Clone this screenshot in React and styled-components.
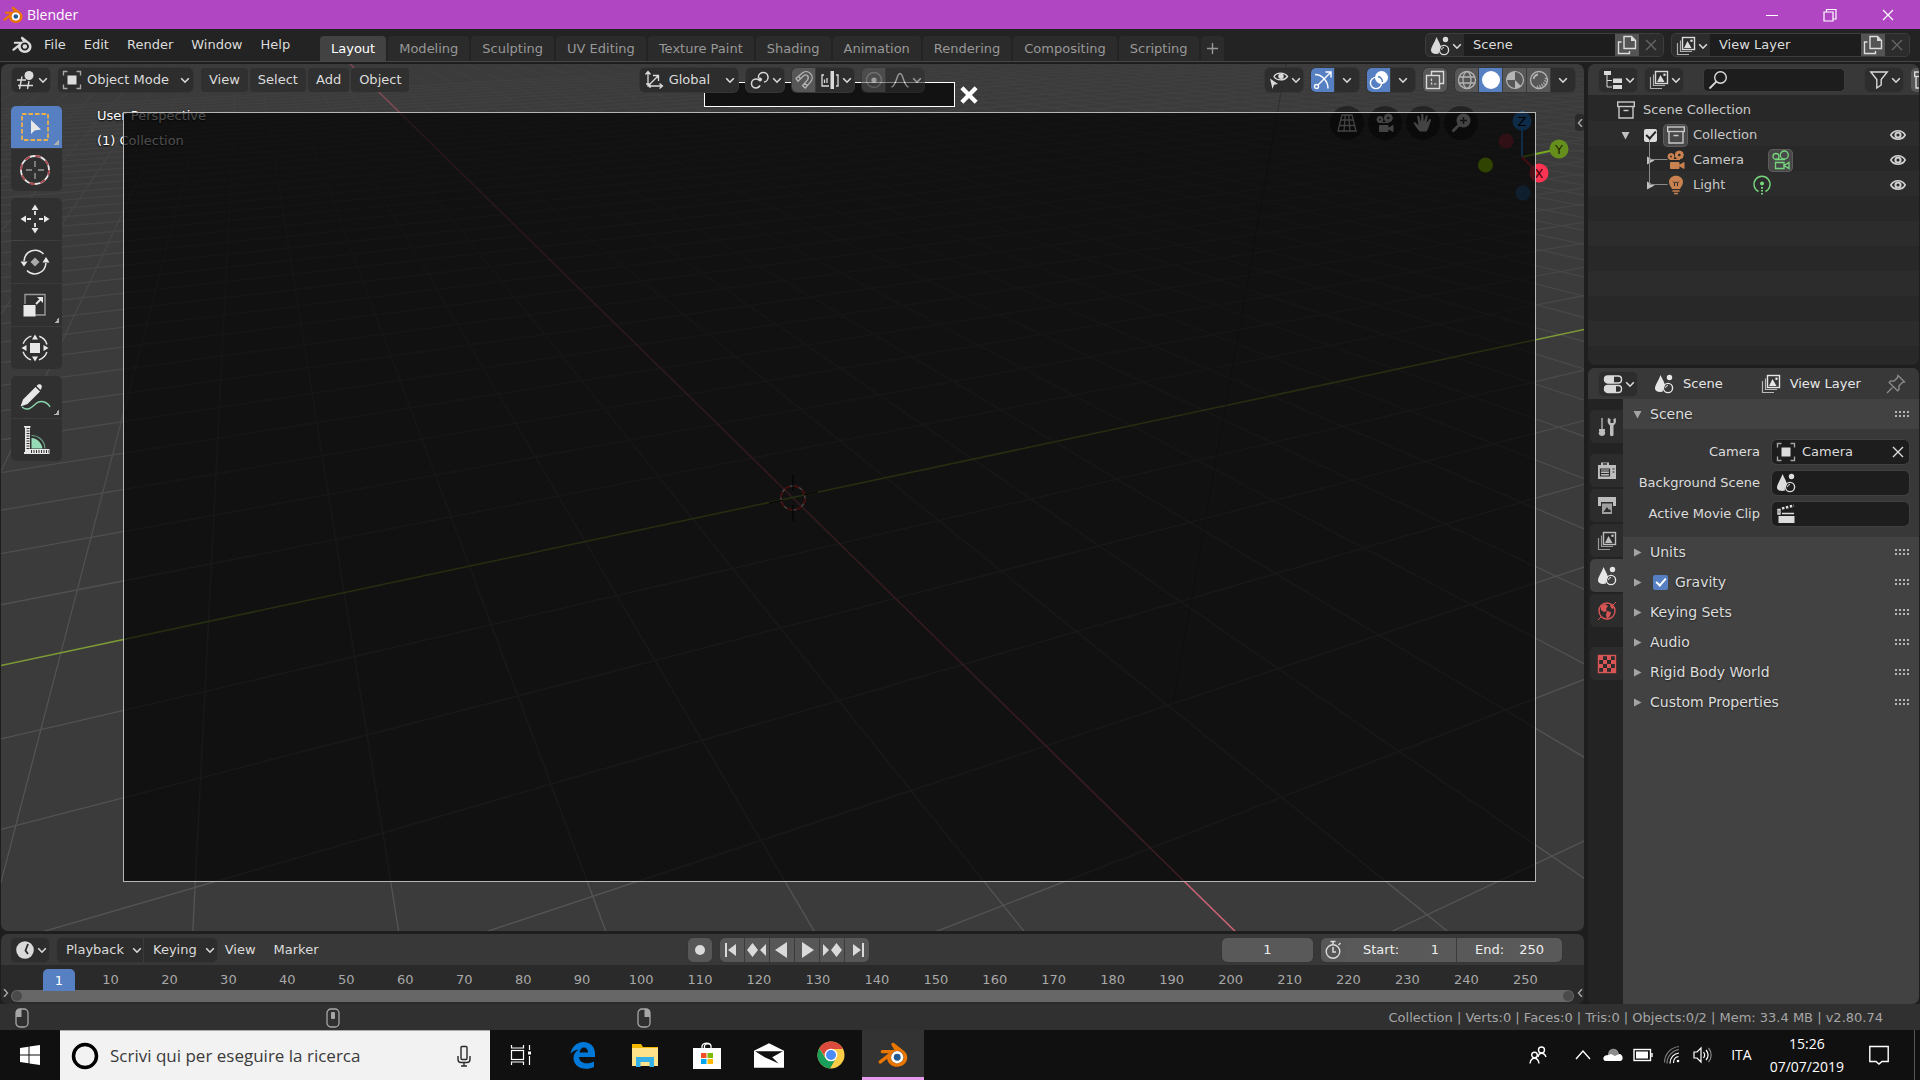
import React from "react";
import styled, { createGlobalStyle, css } from "styled-components";

const GlobalStyle = createGlobalStyle`
  * {
    box-sizing: border-box;
  }
  body {
    margin: 0;
    background: #1e1e1e;
    color: #dcdcdc;
    font-family: "DejaVu Sans", sans-serif;
    font-size: 13px;
    line-height: 16px;
  }
  button, input, select {
    font: inherit;
    color: inherit;
    margin: 0;
    padding: 0;
    border: 0;
    background: none;
    outline: none;
  }
  ul {
    list-style: none;
    margin: 0;
    padding: 0;
  }
  svg {
    display: block;
    flex: none;
  }
`;

/* ---------- icons ---------- */

const Svg = ({ size = 20, box = 20, children, ...rest }) => (
  <svg
    width={size}
    height={size}
    viewBox={`0 0 ${box} ${box}`}
    fill="none"
    stroke="currentColor"
    strokeWidth="1.4"
    aria-hidden="true"
    {...rest}
  >
    {children}
  </svg>
);

const solid = { fill: "currentColor", stroke: "none" };

const Chevron = () => (
  <Svg size={10} box={10} strokeWidth="1.6">
    <path d="M1.2 3.2 5 7.2 8.8 3.2" />
  </Svg>
);

const BlenderLogo = ({ size = 20, main = "currentColor", ring = "none", eye = "currentColor" }) => (
  <Svg size={size} stroke="none">
    <path
      fill={main}
      fillRule="evenodd"
      d="M9.2 2.2c.6-.5 1.3-.4 1.9.1l6.100 4.800c1.500 1.200 2.300 2.800 2.300 4.600 0 3.500-3 6.200-6.700 6.200-3.600 0-6.300-2.300-6.700-5.400l-3.800 3c-.6.4-1.300.4-1.700-.1-.4-.6-.2-1.200.3-1.700l6.300-4.900H3c-.8 0-1.200-.4-1.200-1 0-.7.5-1.100 1.200-1.100h7.800L9.300 3.800c-.6-.5-.6-1.100-.1-1.600ZM12.800 7.400c-2.400 0-4.100 1.800-4.100 4.100s1.800 4 4.100 4 4.200-1.700 4.200-4-1.800-4.100-4.200-4.100Z"
    />
    <circle cx="12.800" cy="11.500" r="4.100" fill={ring} />
    <circle cx="12.800" cy="11.500" r="2.300" fill={eye} />
  </Svg>
);

const ViewportIcon = () => (
  <Svg>
    <path d="M1 10h9M2 15.500h15M6 6.500 3.500 19M13 11l-1.500 8" />
    <circle cx="13" cy="5.500" r="4.500" {...solid} />
  </Svg>
);
const ObjectIcon = () => (
  <Svg>
    <rect x="5.500" y="5.500" width="9" height="9" {...solid} />
    <path d="M1.500 5.500v-4h4M14.500 1.500h4v4M18.500 14.500v4h-4M5.500 18.500h-4v-4" opacity=".7" />
  </Svg>
);
const OrientIcon = () => (
  <Svg>
    <path d="M4 2v14h14M4 16 14 6M1.500 4.500 4 1.500l2.500 3M15.500 13.500l3 2.500-3 2.500M9 5.500h5.500V11M2 14h4v4" strokeWidth="1.300" />
  </Svg>
);
const PivotIcon = () => (
  <Svg strokeWidth="1.500">
    <path d="M8.500 8A4.800 4.800 0 1 1 14 12" />
    <circle cx="6" cy="13.500" r="4.500" strokeDasharray="21 7.300" strokeDashoffset="-2" />
    <circle cx="10" cy="9.500" r="2" {...solid} />
  </Svg>
);
const MagnetIcon = () => (
  <Svg strokeWidth="1.300">
    <path d="M2 8.500 8 3.200c6-5 14 3 8.300 9l-5 5.800-2.800-2.400 5-5.800c2.200-3-1-6.400-4-4L4 11.300ZM4.500 6.500l2.300 2.500M10.500 13l2.800 2.400" />
  </Svg>
);
const IncrementIcon = () => (
  <Svg>
    <path d="M4 5H2v11h7M4.500 13V9.500M7 13V8M16 5h2v11h-2" strokeWidth="1.300" />
    <rect x="10.500" y="1" width="3.500" height="18" {...solid} />
  </Svg>
);
const ProportionalIcon = () => (
  <Svg>
    <circle cx="10" cy="10" r="7.500" opacity=".45" />
    <circle cx="10" cy="10" r="2.600" {...solid} />
  </Svg>
);
const FalloffIcon = () => (
  <Svg>
    <path d="M1.500 17C6.500 16 6.500 3.500 10 3.500S13.500 16 18.500 17" />
  </Svg>
);
const VisibilityIcon = () => (
  <Svg>
    <path d="M5 6.500C7.500 2 15.500 2 18.500 6.500 15.500 11 7.500 11 5 6.500Z" />
    <circle cx="12" cy="6.200" r="2.700" {...solid} />
    <path d="M1 8.500 9 14l-4 .8L3.500 19Z" {...solid} />
  </Svg>
);
const GizmoIcon = () => (
  <Svg>
    <path d="M2 4.500C9 4.500 15 11 15 18.500M5 15 18 2M12.500 2H18v5.500" />
    <circle cx="3.500" cy="16.500" r="2" />
  </Svg>
);
const OverlayIcon = () => (
  <Svg>
    <circle cx="12.500" cy="7.500" r="6.500" {...solid} />
    <circle cx="7" cy="13" r="5.600" />
    <path d="M9 6.500a6 6 0 0 1 4.500 5.500" stroke="#5680c2" />
  </Svg>
);
const XrayIcon = () => (
  <Svg>
    <path d="M6.500 5V1.500h12v12H15" />
    <rect x="1.500" y="5.500" width="13" height="13" />
    <path d="M6.500 8.500v5.500h5" strokeDasharray="2.500 1.500" strokeWidth="1.200" />
  </Svg>
);
const WireIcon = () => (
  <Svg strokeWidth="1.300">
    <circle cx="10" cy="10" r="8.500" />
    <ellipse cx="10" cy="10" rx="4" ry="8.500" />
    <path d="M2 7h16M2 13h16" />
  </Svg>
);
const SolidIcon = () => (
  <Svg>
    <circle cx="10" cy="10" r="9" {...solid} />
  </Svg>
);
const MaterialIcon = () => (
  <Svg>
    <circle cx="10" cy="10" r="8.500" strokeWidth="1.200" />
    <path d="M10 1.500V10l6 6A8.500 8.500 0 0 1 10 18.500V10H1.500A8.500 8.500 0 0 1 10 1.500Z" {...solid} />
  </Svg>
);
const RenderedIcon = () => (
  <Svg>
    <circle cx="10" cy="10" r="8.500" strokeWidth="1.300" />
    <path d="M4.500 9A5.500 5.500 0 0 1 9 4.500" strokeWidth="1.800" />
    <path d="M8 17.500A11 11 0 0 0 17.500 8" strokeWidth="3.500" strokeDasharray="1.300 1.300" opacity=".8" />
  </Svg>
);
const SceneIcon = () => (
  <Svg>
    <path d="M6.500 1c2 4.500 4.500 8 4.500 11-2 1-2.500 3-2 5.500C5 18.500 1 17.500 1 14.500 1 11 5 6 6.500 1Z" {...solid} />
    <circle cx="15.500" cy="3.500" r="2.700" {...solid} />
    <circle cx="14" cy="14" r="4.600" />
    <path d="M11.500 14a2.500 2.500 0 0 1 2.500-2.500" strokeWidth="1" />
  </Svg>
);
const LayerIcon = () => (
  <Svg>
    <rect x="6.500" y="1.500" width="12" height="12" />
    <path d="M4.500 4.500v11h11.500M1.500 7v11.500H13" strokeWidth="1.200" opacity=".75" />
    <path d="M8 12 11.500 5l4 7Z" {...solid} />
    <circle cx="15.500" cy="4.800" r="1.300" {...solid} />
  </Svg>
);
const CopyIcon = () => (
  <Svg>
    <path d="M7 1.500h7.500l4 4v8H7Z" />
    <path d="M14 1.500v4.500h4.500" {...solid} />
    <path d="M4.500 7H1.500v11.500h11V16" />
  </Svg>
);
const CrossIcon = ({ size = 14, width = 1.4 }) => (
  <Svg size={size} box={14} strokeWidth={width}>
    <path d="M2 2l10 10M12 2 2 12" />
  </Svg>
);
const PlusIcon = () => (
  <Svg size={13} box={13}>
    <path d="M6.500 1v11M1 6.500h11" />
  </Svg>
);
const TreeIcon = () => (
  <Svg>
    <rect x="1" y="1" width="7" height="4" {...solid} />
    <rect x="10" y="8.500" width="9" height="4.500" {...solid} />
    <rect x="10" y="15" width="9" height="4" {...solid} />
    <path d="M4 5v12h5M4 10.500h5" strokeWidth="1" />
  </Svg>
);
const SearchIcon = () => (
  <Svg>
    <circle cx="12.500" cy="7.500" r="5.800" />
    <path d="M8.300 11.700 1.500 18.500" strokeWidth="1.800" />
  </Svg>
);
const FilterIcon = () => (
  <Svg>
    <path d="M1.800 2h16.400l-6 7.500V15l-4.400 3V9.500Z" />
  </Svg>
);
const CollectionIcon = () => (
  <Svg>
    <rect x="1.700" y="2" width="16.600" height="4.500" />
    <path d="M3 6.500V18h14V6.500M7.500 10.500h5" />
  </Svg>
);
const CameraIcon = ({ outline }) => (
  <Svg {...(outline ? {} : { fill: "currentColor" })} strokeWidth={outline ? 1.3 : 1}>
    <circle cx="13.300" cy="5" r="4" />
    <circle cx="5" cy="6.500" r="3" />
    <path d="M4 9.500h10M4.500 12.500h8.500v6H4.500ZM13 15.500l5-3v6Z" />
    {!outline && <circle cx="13.300" cy="5" r="1.300" fill="#282828" stroke="none" />}
    {!outline && <circle cx="5" cy="6.500" r=".9" fill="#282828" stroke="none" />}
  </Svg>
);
const BulbIcon = () => (
  <Svg>
    <path d="M10 .8c4 0 7 2.700 7 6.300 0 3-2 4.500-3 6.900H6c-1-2.400-3-3.900-3-6.900C3 3.500 6 .8 10 .8Z" {...solid} />
    <path d="M7 6.500 8.500 8 10 7l1.500 1L13 6.500M8.500 8v3M11.500 8v3" stroke="#2c2c2c" strokeWidth="1" />
    <path d="M6.500 16h7M8 18.500h4" />
  </Svg>
);
const LampDataIcon = () => (
  <Svg>
    <path d="M6.500 16.500A8 8 0 1 1 13.500 16.500" />
    <circle cx="10" cy="8.500" r="2" {...solid} />
    <path d="M10 12v1.800M10 15v1.500M10 18v1.500" strokeWidth="2" />
  </Svg>
);
const EyeIcon = () => (
  <Svg size={16}>
    <path d="M1 10C5 3 15 3 19 10 15 17 5 17 1 10Z" strokeWidth="2" />
    <circle cx="10" cy="10" r="3.200" strokeWidth="2.500" />
  </Svg>
);
const PropsIcon = () => (
  <Svg>
    <rect x="1.500" y="2" width="17" height="7" rx="3.200" />
    <rect x="1.500" y="11.500" width="17" height="7" rx="3.200" />
    <path d="M5 2h6v7H5c-4.500-.5-4.500-6.500 0-7ZM5 11.500h8v7H5c-4.500-.5-4.500-6.500 0-7Z" {...solid} />
  </Svg>
);
const PinIcon = () => (
  <Svg>
    <path d="M12 1.500 18.500 8l-2.300.6-3.300 3.300.2 3.600-1.500 1.300-8.400-8.400 1.300-1.500 3.600.2 3.300-3.300ZM6.500 13.500 1 19" />
  </Svg>
);
const ToolIcon = () => (
  <Svg>
    <path d="M5 1v11" strokeWidth="1.300" />
    <path d="M2 12h6v2H7.500c1.500 2 .5 5-2.500 5s-4-3-2.500-5H2Z" {...solid} />
    <path d="M11 1c-1 4 0 6 2 7.500V18c0 1.500 3.500 1.500 3.500 0V8.500C19 7 19.500 4 18.500 1l-2 1v4h-3V2Z" {...solid} />
  </Svg>
);
const RenderIcon = () => (
  <Svg>
    <path d="M4 4V1.500h8V4h7v14H1V4Z" {...solid} />
    <path d="M3.500 8h9v7h-9ZM3.500 10h9M3.500 12.500h9M15.500 8h2M15.500 11h2" stroke="#2c2c2c" strokeWidth="1.200" />
    <path d="M6 3h4" stroke="#2c2c2c" />
  </Svg>
);
const OutputIcon = () => (
  <Svg>
    <path d="M1 1h18v9h-3V6H4v4H1Z" {...solid} />
    <path d="M5 7.500h10V18H5Z" opacity=".8" {...solid} />
    <path d="M6.500 16 10 11l2 3 1-1 1 3Z" fill="#2c2c2c" stroke="none" />
  </Svg>
);
const WorldIcon = () => (
  <Svg>
    <circle cx="10" cy="10" r="8" />
    <path d="M4 5l4-2 3 2-2 3 1 2-3 1-3-2ZM10 10l4 1-1 4-3 3-1-4ZM14 3l3 4-2 1-2-3Z" {...solid} />
    <path d="M16 4l3-3M4 16l-3 3" strokeWidth="1" />
  </Svg>
);
const TextureIcon = () => (
  <Svg>
    <rect x="1.500" y="1.500" width="17" height="17" />
    {[0, 1, 2, 3].map((r) =>
      [0, 1].map((c) => (
        <rect key={`${r}${c}`} x={2 + c * 8 + (r % 2) * 4} y={2 + r * 4} width="4" height="4" {...solid} />
      ))
    )}
  </Svg>
);
const ClipIcon = () => (
  <Svg>
    <path d="M2.500 12h16v7h-16Z" {...solid} />
    <path d="M2 5.500h2v4.500H2ZM6 9.500h12" />
    <path d="M6 4.500 18 1.500" strokeWidth="2.500" strokeDasharray="2.500 1.500" />
  </Svg>
);
const ClockIcon = () => (
  <Svg>
    <circle cx="10" cy="10" r="8.800" {...solid} />
    <path d="M13 4 10.500 10.500 13 14" stroke="#2c2c2c" strokeWidth="1.800" />
  </Svg>
);
const StopwatchIcon = () => (
  <Svg>
    <circle cx="10" cy="11.500" r="6.800" />
    <path d="M10 7v5h3M7.500 1.500h5M10 1.500v3M15.500 5l2-2" strokeWidth="1.500" />
  </Svg>
);

/* ---------- window chrome ---------- */

const Window = styled.div`
  display: flex;
  flex-direction: column;
  min-height: 100vh;
`;

const TitleBar = styled.header`
  display: flex;
  align-items: center;
  height: 29px;
  padding: 0 3px;
  gap: 4px;
  background: #b146c2;
  color: #fff;
  font-family: "Open Sans", sans-serif;
  font-size: 14px;
`;

const WindowButtons = styled.div`
  display: flex;
  align-self: stretch;
  margin-left: auto;
`;

const WindowButton = styled.button`
  display: grid;
  place-items: center;
  width: 58px;
`;

const MenuBar = styled.nav`
  display: flex;
  align-items: stretch;
  height: 33px;
  margin-bottom: 2px;
  padding: 0 10px 0 12px;
  background: #232323;
  border-bottom: 1px solid #474747;
`;

const Menus = styled.div`
  display: flex;
  align-items: center;
  gap: 18px;
  width: 308px;
`;

const MenuButton = styled.button`
  height: 24px;
`;

const LogoButton = styled(MenuButton)`
  margin-right: -6px;
`;

const Tabs = styled.div`
  display: flex;
  align-items: flex-end;
  gap: 2px;
`;

const Tab = styled.button`
  height: 25px;
  padding: 0 11px;
  border-radius: 4px 4px 0 0;
  background: ${({ $active }) => ($active ? "#424242" : "#2b2b2b")};
  color: ${({ $active }) => ($active ? "#fff" : "#989898")};
`;

const AddTab = styled(Tab)`
  padding: 0 5px;
`;

const DataBlocks = styled.div`
  display: flex;
  align-items: center;
  gap: 7px;
  margin-left: auto;
`;

const DataBlock = styled.div`
  display: flex;
  width: 239px;
  height: 24px;
  border: 1px solid #3d3d3d;
  border-radius: 5px;
  overflow: hidden;
  background: #2c2c2c;
`;

const DataName = styled.input`
  flex: 1;
  min-width: 0;
  padding: 0 9px;
  background: #1d1d1d;
`;

const DataButton = styled.button`
  display: grid;
  place-items: center;
  width: 24px;
  background: ${({ $raised }) => ($raised ? "#545454" : "#2c2c2c")};
  color: ${({ $raised }) => ($raised ? "#dcdcdc" : "#666")};
`;

/* ---------- shared controls ---------- */

const Main = styled.main`
  display: flex;
  flex: 1;
  gap: 4px;
  padding: 0 1px;
`;

const LeftColumn = styled.div`
  display: flex;
  flex-direction: column;
  flex: 1;
  min-width: 0;
  gap: 3px;
`;

const RightColumn = styled.aside`
  display: flex;
  flex-direction: column;
  width: 331px;
  gap: 3px;
`;

const Group = styled.div`
  display: flex;
  height: 24px;
  border-radius: 5px;
  overflow: hidden;
  background: #2d2d2d;
  box-shadow: 0 0 0 1px #363636;
  opacity: ${({ $muted }) => ($muted ? 0.6 : 1)};
`;

const Control = styled.button`
  display: flex;
  align-items: center;
  justify-content: center;
  gap: 2px;
  height: 24px;
  min-width: 24px;
  padding: ${({ $menu }) => ($menu ? "0 2px 0 4px" : "0 2px")};
  color: ${({ $on, $dim }) => ($on ? "#fff" : $dim ? "#b4b4b4" : "#dadada")};
  background: ${({ $on, $raised }) => ($on ? "#5680c2" : $raised ? "#575757" : "transparent")};
  & + & {
    box-shadow: -1px 0 0 #3b3b3b;
  }
`;

const SelectBox = styled.label`
  display: flex;
  align-items: center;
  gap: 5px;
  width: ${({ $width }) => $width};
  height: 24px;
  padding: 0 3px 0 4px;
  select {
    flex: 1;
    min-width: 0;
    height: 24px;
    appearance: none;
  }
`;

const TextControl = styled.button`
  height: 24px;
  padding: 0 8px;
  border-radius: 4px;
  background: ${({ $flat }) => ($flat ? "transparent" : "#303030")};
`;

const MenuControl = ({ icon: Icon, label }) => (
  <Group>
    <Control $menu aria-label={label}>
      <Icon />
      <Chevron />
    </Control>
  </Group>
);

const Dropdown = ({ icon: Icon, label, value, width }) => (
  <Group>
    <SelectBox $width={width}>
      <Icon />
      <select aria-label={label} defaultValue={value}>
        <option>{value}</option>
      </select>
      <Chevron />
    </SelectBox>
  </Group>
);

/* ---------- 3D viewport ---------- */

const Viewport = styled.section`
  position: relative;
  flex: 1;
  min-height: 480px;
  border-radius: 7px;
  overflow: hidden;
  background: #3b3b3b;
`;

const FloorSvg = styled.svg`
  position: absolute;
  inset: 0;
  width: 100%;
  height: 100%;
`;

const ViewLabel = styled.div`
  position: absolute;
  left: 96px;
  top: 39px;
  line-height: 25px;
  color: #fff;
  text-shadow: 0 1px 2px #000;
`;

const NavButtons = styled.div`
  position: absolute;
  top: 42px;
  right: 106px;
  display: flex;
  gap: 4px;
`;

const NavButton = styled.button`
  display: grid;
  place-items: center;
  width: 34px;
  height: 34px;
  border-radius: 50%;
  background: rgba(0, 0, 0, 0.4);
  color: #e0e0e0;
`;

const AxisGizmo = styled.svg`
  position: absolute;
  top: 38px;
  right: 7px;
  font-size: 13px;
`;

const Shade = styled.div`
  position: absolute;
  inset: 48px 48px 49px 122px;
  border: 1px solid #b5b5b5;
  background: rgba(0, 0, 0, 0.7);
`;

const CaptureBox = styled.div`
  position: absolute;
  top: 18px;
  left: 703px;
  display: flex;
  align-items: center;
  gap: 4px;
  color: #fff;
`;

const CaptureInput = styled.input`
  width: 251px;
  height: 25px;
  border: 1px solid #fff;
  background: #121212;
`;

const ViewHeader = styled.div`
  position: relative;
  display: flex;
  padding: 4px 9px 0 11px;
  gap: 8px;
`;

const MenuRow = styled.div`
  display: flex;
  gap: 2px;
`;

const Spacer = styled.div`
  flex: ${({ $grow }) => $grow};
  margin-right: -8px;
`;

const Toolbar = styled.div`
  position: absolute;
  top: 42px;
  left: 10px;
  display: flex;
  flex-direction: column;
  gap: 7px;
`;

const ToolGroup = styled.div`
  display: flex;
  flex-direction: column;
  gap: 1px;
  border-radius: 5px;
  overflow: hidden;
`;

const ToolButton = styled.button`
  display: grid;
  place-items: center;
  width: 51px;
  height: 42px;
  padding-right: 3px;
  color: #e8e8e8;
  background: ${({ $active }) => ($active ? "#5680c2" : "#303030")};
  ${({ $more }) =>
    $more &&
    css`
      background-image: linear-gradient(135deg, transparent 50%, #b0b0b0 50%);
      background-size: 5px 5px;
      background-position: 43px 34px;
      background-repeat: no-repeat;
    `}
`;

const RegionToggle = styled.button`
  position: absolute;
  right: ${({ $side }) => ($side === "right" ? 0 : "auto")};
  left: ${({ $side }) => ($side === "left" ? 0 : "auto")};
  top: 50px;
  display: grid;
  place-items: center;
  width: 9px;
  height: 17px;
  border-radius: 3px;
  background: #2a2a2a;
  color: #aaa;
`;

const VIEW = { width: 1583, height: 867, focal: 1099, distance: 10.39 };

// perspective projection of a point on the floor plane
const project = (x, y) => {
  const depth = VIEW.distance - 0.8188 * x + 0.3617 * y;
  const sx = VIEW.width / 2 + (VIEW.focal * (0.41 * x + 0.912 * y)) / depth;
  const sy = VIEW.height / 2 + (VIEW.focal * (0.4018 * x - 0.1936 * y)) / depth;
  return [sx, sy];
};

const NEAR = 0.8;
const FAR = 60;

const alongX = (y) => [project(-FAR, y), project(Math.min(FAR, (VIEW.distance + 0.3617 * y - NEAR) / 0.8188), y)];
const alongY = (x) => [project(x, Math.max(-FAR, (NEAR + 0.8188 * x - VIEW.distance) / 0.3617)), project(x, FAR)];

const gridLines = [];
for (let i = -40; i <= 40; i++) {
  if (i === 0) continue;
  if (VIEW.distance + 0.3617 * i > NEAR) gridLines.push(alongX(i));
  gridLines.push(alongY(i));
}

const Line = ({ points: [a, b], ...rest }) => <line x1={a[0]} y1={a[1]} x2={b[0]} y2={b[1]} {...rest} />;

const Floor = () => (
  <FloorSvg viewBox="0 0 1583 867" preserveAspectRatio="xMidYMid slice" aria-hidden="true">
    <defs>
      <linearGradient id="fade" x1="0" y1="0" x2="0" y2="867" gradientUnits="userSpaceOnUse">
        <stop offset="0" stopColor="#fff" stopOpacity=".14" />
        <stop offset=".2" stopColor="#fff" stopOpacity=".4" />
        <stop offset=".6" stopColor="#fff" stopOpacity=".85" />
        <stop offset="1" stopColor="#fff" />
      </linearGradient>
      <linearGradient id="axis" x1="0" y1="0" x2="0" y2="867" gradientUnits="userSpaceOnUse">
        <stop offset="0" stopColor="#c4566a" stopOpacity=".45" />
        <stop offset=".4" stopColor="#c4566a" stopOpacity=".8" />
        <stop offset="1" stopColor="#cf6274" />
      </linearGradient>
      <mask id="distance" maskUnits="userSpaceOnUse" x="0" y="0" width="1583" height="867">
        <rect width="1583" height="867" fill="url(#fade)" />
      </mask>
    </defs>
    <g mask="url(#distance)" stroke="#555" strokeWidth="1.3">
      {gridLines.map((points, i) => (
        <Line key={i} points={points} />
      ))}
    </g>
    <Line points={alongX(0)} stroke="url(#axis)" strokeWidth="1.500" />
    <Line points={alongY(0)} stroke="#7c9b36" strokeWidth="1.500" />
    <path d="M1285 0 1172 640" stroke="#202020" strokeWidth="1" opacity=".45" />
    <g fill="none" strokeWidth="1.600">
      <circle cx="792" cy="434" r="12" stroke="#e8e8e8" />
      <circle cx="792" cy="434" r="12" stroke="#e01818" strokeDasharray="6 3.425" />
      <path d="M792 411v16M792 441v16M768 439l14-3M803 431l14-3" stroke="#000" strokeWidth="1" />
    </g>
  </FloorSvg>
);

const Gizmo = () => (
  <AxisGizmo width="110" height="110" viewBox="0 0 110 110" textAnchor="middle" aria-label="Navigation gizmo">
    <circle cx="18.500" cy="63" r="7.500" fill="#a2e000" />
    <circle cx="39" cy="39" r="7.500" fill="#a03448" />
    <circle cx="56" cy="91" r="7.500" fill="#34689c" />
    <g strokeWidth="2" fill="none">
      <path d="M55 55V19" stroke="#2f92ee" />
      <path d="M55 55 92 47" stroke="#78a820" />
      <path d="M55 55 72 72" stroke="#d82c49" />
    </g>
    <circle cx="55" cy="19" r="9.500" fill="#2f92ee" />
    <circle cx="92" cy="47" r="9.500" fill="#658e1c" />
    <circle cx="72" cy="71" r="9.500" fill="#ff3352" />
    <text x="55" y="24" fill="#000">Z</text>
    <text x="92" y="52" fill="#1c2600">Y</text>
    <text x="72" y="76" fill="#400008">X</text>
  </AxisGizmo>
);

const ToolSvg = (props) => <Svg size={32} box={32} {...props} />;

const tools = [
  [
    {
      name: "Select Box",
      active: true,
      more: true,
      icon: (
        <ToolSvg>
          <rect x="3" y="3" width="26" height="26" stroke="#e8b04c" strokeWidth="1.800" strokeDasharray="4.500 2" />
          <path d="M12 9v14l3.500-3.500L22 18.500Z" {...solid} />
        </ToolSvg>
      ),
    },
    {
      name: "Cursor",
      icon: (
        <ToolSvg>
          <circle cx="16" cy="16" r="14" strokeWidth="1.800" />
          <circle cx="16" cy="16" r="14" stroke="#a8474c" strokeWidth="1.800" strokeDasharray="5.500 5.500" />
          <path d="M16 7v6M16 19v6M7 16h6M19 16h6" stroke="#999" />
        </ToolSvg>
      ),
    },
  ],
  [
    {
      name: "Move",
      icon: (
        <ToolSvg>
          <path d="M16 1.500 19.500 7h-7ZM16 30.500 19.500 25h-7ZM1.500 16 7 12.500v7ZM30.500 16 25 12.500v7Z" {...solid} />
          <path d="M16 8v4M16 20v4M8 16h4M20 16h4" strokeWidth="1.800" />
        </ToolSvg>
      ),
    },
    {
      name: "Rotate",
      icon: (
        <ToolSvg>
          <path d="M5 15C6 4 18 1 24.500 8M27 17C26 28 14 31 8 24.500" strokeWidth="1.500" />
          <path d="M1.500 15.500h7L5 20.500ZM23.500 16.500h7L27 11Z" {...solid} />
          <path d="M16 11.500 20.500 16 16 20.500 11.500 16Z" fill="#aaa" stroke="none" />
        </ToolSvg>
      ),
    },
    {
      name: "Scale",
      more: true,
      icon: (
        <ToolSvg>
          <path d="M6 15V5.500h20V26H16" stroke="#999" />
          <rect x="4.500" y="16" width="12" height="11.500" {...solid} />
          <path d="M17 15l5-5" strokeWidth="1.800" />
          <path d="M24 8v6l-6-6Z" {...solid} />
        </ToolSvg>
      ),
    },
    {
      name: "Transform",
      icon: (
        <ToolSvg>
          <circle cx="16" cy="16" r="12.500" strokeDasharray="11.500 8.135" strokeDashoffset="-4" />
          <rect x="11" y="11" width="10" height="10" {...solid} />
          <path d="M16 2.500 19 7.500h-6ZM16 29.500 19 24.500h-6ZM2.500 16 7.500 13v6ZM29.500 16 24.500 13v6Z" {...solid} />
        </ToolSvg>
      ),
    },
  ],
  [
    {
      name: "Annotate",
      more: true,
      icon: (
        <ToolSvg>
          <path d="M3 26c6 5 10 0 14-3.500S28 20 31 26" stroke="#8ad4ab" strokeWidth="1.500" />
          <path d="M4 18.500 16.500 6l4.500 4.500L8.500 23 1.500 25.500ZM17.500 5l1.300-1.300c3-1.500 5 1 3.700 3.300L21.500 9Z" {...solid} />
        </ToolSvg>
      ),
    },
    {
      name: "Measure",
      icon: (
        <ToolSvg>
          <path d="M5 2h6.500v1.500H11V25h19.500v5H5v-2h1V3.500H5Z" {...solid} />
          <path d="M9 4v22" stroke="#303030" strokeDasharray="1 1.500" strokeWidth="3" />
          <path d="M12 27.500h18" stroke="#303030" strokeDasharray="1 1.500" strokeWidth="3" />
          <path d="M12.500 24.500V14c6 .5 10 4.500 11 10.500Z" fill="#96dbb5" stroke="none" />
          <path d="M12.500 11.500c7 0 13 5 13.500 13" stroke="#6aa184" strokeWidth="1.200" />
        </ToolSvg>
      ),
    },
  ],
];

const PerspIcon = () => (
  <Svg strokeWidth="1.300">
    <path d="M5 2h10l4 16H1ZM3.500 7h13M2.500 12.500h15M8.300 2 7 18M11.700 2 13 18" />
  </Svg>
);
const HandIcon = () => (
  <Svg stroke="none">
    <path
      fill="currentColor"
      d="M7 18.500C4.500 16.500 2.500 13 .8 10.500c-.5-1 .9-1.800 1.800-.8L5.500 12 4.200 3.800c-.1-1.400 1.600-1.600 2-.3L8 9l.3-7.500C8.400.2 10.200.2 10.300 1.500L10.800 9l2-6c.5-1.200 2.100-.7 1.900.6L13.500 10l2.800-3.500c.8-1 2.200-.1 1.700 1C16.500 10.500 16 15 13.500 18.500Z"
    />
  </Svg>
);
const ZoomIcon = () => (
  <Svg>
    <circle cx="12.500" cy="7.500" r="7" {...solid} />
    <path d="M8 12 1.500 18.500" strokeWidth="2.800" />
    <path d="M9 7.500h7M12.500 4v7" stroke="#3b3b3b" strokeWidth="1.500" />
  </Svg>
);

const navButtons = [
  { label: "Toggle perspective", icon: PerspIcon },
  { label: "Camera view", icon: CameraIcon },
  { label: "Pan", icon: HandIcon },
  { label: "Zoom", icon: ZoomIcon },
];

const shadingModes = [
  { label: "Wireframe", icon: WireIcon },
  { label: "Solid", icon: SolidIcon, on: true },
  { label: "Material preview", icon: MaterialIcon },
  { label: "Rendered", icon: RenderedIcon },
];

const View3D = () => (
  <Viewport>
    <Floor />
    <ViewLabel>
      User Perspective
      <br />
      (1) Collection
    </ViewLabel>
    <NavButtons>
      {navButtons.map(({ label, icon: Icon }) => (
        <NavButton key={label} aria-label={label}>
          <Icon />
        </NavButton>
      ))}
    </NavButtons>
    <Gizmo />
    <RegionToggle $side="right" aria-label="Show sidebar">
      <Svg size={8} box={8}>
        <path d="M6 0 2.500 4 6 8" />
      </Svg>
    </RegionToggle>
    <Shade />
    <CaptureBox>
      <CaptureInput aria-label="Capture" />
      <CrossIcon size={20} width={3} />
    </CaptureBox>
    <ViewHeader>
      <MenuControl icon={ViewportIcon} label="Editor type" />
      <Dropdown icon={ObjectIcon} label="Mode" value="Object Mode" width="135px" />
      <MenuRow>
        {["View", "Select", "Add", "Object"].map((name) => (
          <TextControl key={name}>{name}</TextControl>
        ))}
      </MenuRow>
      <Spacer $grow={2} />
      <Dropdown icon={OrientIcon} label="Transform orientation" value="Global" width="98px" />
      <MenuControl icon={PivotIcon} label="Pivot point" />
      <Group>
        <Control $raised $dim aria-label="Snap">
          <MagnetIcon />
        </Control>
        <Control $menu aria-label="Snap to">
          <IncrementIcon />
          <Chevron />
        </Control>
      </Group>
      <Group $muted>
        <Control $raised aria-label="Proportional editing">
          <ProportionalIcon />
        </Control>
        <Control $menu aria-label="Falloff">
          <FalloffIcon />
          <Chevron />
        </Control>
      </Group>
      <Spacer $grow={3} />
      <MenuControl icon={VisibilityIcon} label="Object visibility" />
      <Group>
        <Control $on aria-label="Show gizmos">
          <GizmoIcon />
        </Control>
        <Control aria-label="Gizmo options">
          <Chevron />
        </Control>
      </Group>
      <Group>
        <Control $on aria-label="Show overlays">
          <OverlayIcon />
        </Control>
        <Control aria-label="Overlay options">
          <Chevron />
        </Control>
      </Group>
      <Group>
        <Control $raised aria-label="Toggle X-ray">
          <XrayIcon />
        </Control>
      </Group>
      <Group>
        {shadingModes.map(({ label, icon: Icon, on }) => (
          <Control key={label} $raised $on={on} $dim aria-label={label}>
            <Icon />
          </Control>
        ))}
        <Control aria-label="Shading options">
          <Chevron />
        </Control>
      </Group>
    </ViewHeader>
    <Toolbar>
      {tools.map((group) => (
        <ToolGroup key={group[0].name}>
          {group.map((tool) => (
            <ToolButton key={tool.name} $active={tool.active} $more={tool.more} aria-label={tool.name}>
              {tool.icon}
            </ToolButton>
          ))}
        </ToolGroup>
      ))}
    </Toolbar>
  </Viewport>
);

/* ---------- timeline ---------- */

const TimelinePanel = styled.section`
  position: relative;
  border-radius: 7px;
  overflow: hidden;
  background: #2a2a2a;
`;

const TimelineHeader = styled.div`
  display: flex;
  align-items: center;
  gap: 8px;
  height: 31px;
  padding: 1px 22px 0 10px;
  background: #383838;
`;

const TimelineMenus = styled.div`
  display: flex;
`;

const MenuText = styled.span`
  padding: 0 6px 0 5px;
`;

const Transport = styled.div`
  display: flex;
  gap: 8px;
  margin: 0 auto;
  padding-left: 8px;
`;

const TransportGroup = styled(Group)`
  gap: 1px;
`;

const Field = styled.label`
  display: flex;
  align-items: center;
  width: ${({ $width }) => $width};
  height: 24px;
  padding: 0 18px;
  background: #595959;
  color: #eee;
  & + & {
    box-shadow: -1px 0 0 #3b3b3b;
  }
  input {
    flex: 1;
    width: 0;
    text-align: ${({ $align }) => $align || "right"};
  }
`;

const Ruler = styled.div`
  display: flex;
  align-items: center;
  height: 25px;
  padding: 5px 29px 0 42px;
  color: #a8a8a8;
`;

const CurrentFrame = styled.div`
  width: 32px;
  height: 22px;
  margin-right: 6px;
  border-radius: 5px 5px 0 0;
  background: #5680c2;
  color: #fff;
  line-height: 24px;
  text-align: center;
`;

const Frame = styled.div`
  flex: 1 1 0;
  text-align: center;
`;

const ScrollTrack = styled.div`
  display: flex;
  justify-content: space-between;
  align-items: center;
  height: 12px;
  margin: 0 10px 2px;
  padding: 0 1px;
  border-radius: 6px;
  background: #676767;
`;

const ScrollCap = styled.span`
  width: 10px;
  height: 10px;
  border-radius: 50%;
  background: #4a4a4a;
`;

const transport = [
  ["Jump to start", "M3 3h2v14H3ZM14 4v12l-8-6Z"],
  ["Previous keyframe", "M0 10 5.500 3l5.500 7-5.500 7ZM19 4v12l-6-6Z"],
  ["Play reversed", "M15 2v16L3 10Z"],
  ["Play", "M5 2v16l12-8Z"],
  ["Next keyframe", "M1 4v12l6-6ZM9 10l5.500-7 5.500 7-5.500 7Z"],
  ["Jump to end", "M15 3h2v14h-2ZM6 4v12l8-6Z"],
];

const frames = Array.from({ length: 25 }, (_, i) => (i + 1) * 10);

const Timeline = () => (
  <TimelinePanel>
    <TimelineHeader>
      <MenuControl icon={ClockIcon} label="Editor type" />
      <TimelineMenus>
        <Group>
          {["Playback", "Keying"].map((name) => (
            <Control key={name} $menu>
              <MenuText>{name}</MenuText>
              <Chevron />
            </Control>
          ))}
        </Group>
        <MenuRow>
          <TextControl $flat>View</TextControl>
          <TextControl $flat>Marker</TextControl>
        </MenuRow>
      </TimelineMenus>
      <Transport>
        <Group>
          <Control $raised aria-label="Auto keying">
            <Svg>
              <circle cx="10" cy="10" r="5" {...solid} />
            </Svg>
          </Control>
        </Group>
        <TransportGroup>
          {transport.map(([label, d]) => (
            <Control key={label} $raised aria-label={label}>
              <Svg>
                <path d={d} {...solid} />
              </Svg>
            </Control>
          ))}
        </TransportGroup>
      </Transport>
      <Group>
        <Field $width="91px" $align="center">
          <input aria-label="Current frame" defaultValue="1" />
        </Field>
      </Group>
      <Group>
        <Control $raised aria-label="Use preview range">
          <StopwatchIcon />
        </Control>
        <Field $width="112px">
          Start:
          <input defaultValue="1" />
        </Field>
        <Field $width="105px">
          End:
          <input defaultValue="250" />
        </Field>
      </Group>
    </TimelineHeader>
    <Ruler>
      <CurrentFrame>1</CurrentFrame>
      {frames.map((frame) => (
        <Frame key={frame}>{frame}</Frame>
      ))}
    </Ruler>
    <ScrollTrack>
      <ScrollCap />
      <ScrollCap />
    </ScrollTrack>
    <RegionToggle $side="left" aria-label="Show channels">
      <Svg size={8} box={8}>
        <path d="M2 0 5.500 4 2 8" />
      </Svg>
    </RegionToggle>
    <RegionToggle $side="right" aria-label="Show sidebar">
      <Svg size={8} box={8}>
        <path d="M6 0 2.500 4 6 8" />
      </Svg>
    </RegionToggle>
  </TimelinePanel>
);

/* ---------- outliner ---------- */

const Outliner = styled.section`
  display: flex;
  flex-direction: column;
  height: 301px;
  border-radius: 7px;
  overflow: hidden;
  background: #282828;
`;

const EditorHeader = styled.div`
  display: flex;
  align-items: center;
  flex: none;
  gap: 8px;
  height: 31px;
  padding-left: 11px;
  background: #383838;
  overflow: hidden;
`;

const SearchField = styled.label`
  display: flex;
  align-items: center;
  flex: 1;
  min-width: 0;
  height: 24px;
  margin: 0 12px;
  padding: 0 4px;
  border: 1px solid #3d3d3d;
  border-radius: 5px;
  background: #1d1d1d;
  input {
    flex: 1;
    min-width: 0;
  }
`;

const ClippedButton = styled(Control)`
  width: 8px;
  min-width: 8px;
  padding: 0 0 0 2px;
  justify-content: flex-start;
  border-radius: 5px 0 0 5px;
  overflow: hidden;
`;

const Tree = styled.ul`
  position: relative;
  flex: 1;
  padding-top: 1px;
  background: repeating-linear-gradient(#282828 0 25px, #2c2c2c 25px 50px) 0 1px;
`;

const TreeRow = styled.li`
  display: flex;
  align-items: center;
  height: 25px;
  padding: 3px 13px 0 ${({ $indent }) => $indent}px;
  color: #c8c8c8;
`;

const Twisty = styled.button`
  width: 20px;
  height: 20px;
  flex: none;
  display: grid;
  place-items: center;
  color: #c0c0c0;
`;

const IconBox = styled.span`
  display: grid;
  place-items: center;
  width: 25px;
  height: 23px;
  margin-left: ${({ $gap }) => $gap || 0}px;
  border-radius: 5px;
  color: ${({ $color }) => $color || "#c8c8c8"};
  background: ${({ $framed }) => ($framed ? "#484848" : "none")};
  box-shadow: ${({ $framed }) => ($framed ? "inset 0 0 0 1px #5c5c5c" : "none")};
`;

const RowName = styled.span`
  margin-left: 5px;
`;

const EyeButton = styled.button`
  margin-left: auto;
  color: #d0d0d0;
`;

const TreeLines = styled.svg`
  position: absolute;
  top: 44px;
  left: 60px;
`;

const CheckBox = styled.input.attrs({ type: "checkbox" })`
  appearance: none;
  flex: none;
  width: ${({ $size }) => $size}px;
  height: ${({ $size }) => $size}px;
  border-radius: 2px;
  background: ${({ $tone }) => $tone};
  color: ${({ $tick }) => $tick};
  display: grid;
  place-items: center;
  &:checked::before {
    content: "";
    width: 4px;
    height: 8px;
    margin-bottom: 2px;
    border: solid currentColor;
    border-width: 0 2px 2px 0;
    transform: rotate(42deg);
  }
`;

const CollectionCheck = styled(CheckBox)`
  margin-left: 9px;
`;

const Triangle = ({ open }) => (
  <Svg size={9} box={9} stroke="none">
    <path fill="currentColor" d={open ? "M.5 1h8l-4 7.500Z" : "M1 .5v8l7.500-4Z"} />
  </Svg>
);

const objects = [
  { name: "Camera", icon: CameraIcon, data: <CameraIcon outline />, framed: true },
  { name: "Light", icon: BulbIcon, data: <LampDataIcon /> },
];

const OutlinerEditor = () => (
  <Outliner>
    <EditorHeader>
      <MenuControl icon={TreeIcon} label="Editor type" />
      <MenuControl icon={LayerIcon} label="Display mode" />
      <SearchField>
        <SearchIcon />
        <input aria-label="Search" />
      </SearchField>
      <MenuControl icon={FilterIcon} label="Filter" />
      <ClippedButton $raised aria-label="New collection">
        <CollectionIcon />
      </ClippedButton>
    </EditorHeader>
    <Tree>
      <TreeLines width="20" height="50" stroke="#8a8a8a" fill="none" aria-hidden="true">
        <path d="M1.500 0v45M1.500 20.500h18M1.500 45.500h18" />
      </TreeLines>
      <TreeRow $indent={25}>
        <IconBox>
          <CollectionIcon />
        </IconBox>
        <RowName>Scene Collection</RowName>
      </TreeRow>
      <TreeRow $indent={27}>
        <Twisty aria-label="Collapse">
          <Triangle open />
        </Twisty>
        <CollectionCheck $size={13} $tone="#dcdcdc" $tick="#222" defaultChecked aria-label="Enable collection" />
        <IconBox $framed $gap={6}>
          <CollectionIcon />
        </IconBox>
        <RowName>Collection</RowName>
        <EyeButton aria-label="Hide Collection">
          <EyeIcon />
        </EyeButton>
      </TreeRow>
      {objects.map(({ name, icon: Icon, data, framed }) => (
        <TreeRow key={name} $indent={52}>
          <Twisty aria-label={`Expand ${name}`}>
            <Triangle />
          </Twisty>
          <IconBox $color="#c9824f" $gap={3}>
            <Icon />
          </IconBox>
          <RowName>{name}</RowName>
          <IconBox $framed={framed} $color="#76d67d" $gap={24}>
            {data}
          </IconBox>
          <EyeButton aria-label={`Hide ${name}`}>
            <EyeIcon />
          </EyeButton>
        </TreeRow>
      ))}
    </Tree>
  </Outliner>
);

/* ---------- properties ---------- */

const Properties = styled.section`
  display: flex;
  flex-direction: column;
  flex: 1;
  border-radius: 7px;
  overflow: hidden;
  background: #424242;
`;

const Crumb = styled.span`
  display: flex;
  align-items: center;
  gap: 9px;
  margin-left: ${({ $indent }) => $indent}px;
  color: #e6e6e6;
`;

const PinButton = styled.button`
  margin: 0 13px 0 auto;
  color: #8a8a8a;
`;

const PropsBody = styled.div`
  display: flex;
  flex: 1;
`;

const SideTabs = styled.div`
  display: flex;
  flex-direction: column;
  gap: 2px;
  width: 35px;
  padding: 11px 0 0 2px;
  background: #232323;
`;

const SideTab = styled.button`
  display: grid;
  place-items: center;
  height: 33px;
  margin-top: ${({ $space }) => $space || 0}px;
  border-radius: 5px 0 0 5px;
  background: ${({ $active }) => ($active ? "#424242" : "#2c2c2c")};
  color: ${({ $color, $active }) => $color || ($active ? "#e6e6e6" : "#bdbdbd")};
`;

const Panels = styled.div`
  flex: 1;
`;

const PanelHeader = styled.div`
  display: flex;
  align-items: center;
  height: 30px;
  padding: 0 10px;
  color: #dcdcdc;
  font-size: 14px;
  svg {
    color: #a4a4a4;
  }
`;

const PanelToggle = styled.button`
  display: flex;
  align-items: center;
  gap: 8px;
  text-shadow: 0 1px 2px #222;
`;

const GravityCheck = styled(CheckBox)`
  margin: 0 7px 0 11px;
`;

const PanelName = styled.label`
  text-shadow: 0 1px 2px #222;
`;

const Grip = styled.span`
  width: 15px;
  height: 8px;
  margin-left: auto;
  background: radial-gradient(#b5b5b5 1px, transparent 1px) 0 0 / 4px 4px;
`;

const PanelBody = styled.div`
  display: grid;
  grid-template-columns: 1fr 137px;
  align-items: center;
  gap: 7px 12px;
  padding: 11px 10px;
  background: #383838;
  text-align: right;
`;

const PropField = styled.div`
  display: flex;
  align-items: center;
  gap: 6px;
  height: 24px;
  padding: 0 4px;
  border-radius: 5px;
  background: #1d1d1d;
  box-shadow: 0 0 0 1px #404040;
  input {
    flex: 1;
    min-width: 0;
  }
`;

const sideTabs = [
  { label: "Tool", icon: ToolIcon },
  { label: "Render", icon: RenderIcon, space: 9 },
  { label: "Output", icon: OutputIcon },
  { label: "View Layer", icon: LayerIcon },
  { label: "Scene", icon: SceneIcon, active: true },
  { label: "World", icon: WorldIcon, color: "#d95555" },
  { label: "Texture", icon: TextureIcon, color: "#d95555", space: 18 },
];

const sceneFields = [
  { id: "camera", label: "Camera", icon: ObjectIcon, value: "Camera" },
  { id: "background", label: "Background Scene", icon: SceneIcon },
  { id: "clip", label: "Active Movie Clip", icon: ClipIcon },
];

const closedPanels = ["Keying Sets", "Audio", "Rigid Body World", "Custom Properties"];

const Panel = ({ name, open }) => (
  <PanelHeader>
    <PanelToggle aria-expanded={!!open}>
      <Triangle open={open} />
      {name}
    </PanelToggle>
    <Grip />
  </PanelHeader>
);

const PropertiesEditor = () => (
  <Properties>
    <EditorHeader>
      <MenuControl icon={PropsIcon} label="Editor type" />
      <Crumb $indent={9}>
        <SceneIcon />
        Scene
      </Crumb>
      <Crumb $indent={30}>
        <LayerIcon />
        View Layer
      </Crumb>
      <PinButton aria-label="Pin">
        <PinIcon />
      </PinButton>
    </EditorHeader>
    <PropsBody>
      <SideTabs>
        {sideTabs.map(({ label, icon: Icon, active, color, space }) => (
          <SideTab key={label} $active={active} $color={color} $space={space} aria-label={label}>
            <Icon />
          </SideTab>
        ))}
      </SideTabs>
      <Panels>
        <Panel name="Scene" open />
        <PanelBody>
          {sceneFields.map(({ id, label, icon: Icon, value }) => (
            <React.Fragment key={id}>
              <label htmlFor={id}>{label}</label>
              <PropField>
                <Icon />
                <input id={id} defaultValue={value} />
                {value && (
                  <button aria-label="Clear">
                    <CrossIcon />
                  </button>
                )}
              </PropField>
            </React.Fragment>
          ))}
        </PanelBody>
        <Panel name="Units" />
        <PanelHeader>
          <PanelToggle aria-label="Expand Gravity">
            <Triangle />
          </PanelToggle>
          <GravityCheck $size={15} $tone="#5680c2" $tick="#fff" id="gravity" defaultChecked />
          <PanelName htmlFor="gravity">Gravity</PanelName>
          <Grip />
        </PanelHeader>
        {closedPanels.map((name) => (
          <Panel key={name} name={name} />
        ))}
      </Panels>
    </PropsBody>
  </Properties>
);

/* ---------- status bar ---------- */

const StatusBar = styled.footer`
  display: flex;
  align-items: center;
  height: 26px;
  padding: 1px 37px 0 15px;
  background: #303030;
  color: #a6a6a6;
`;

const MouseHint = styled.span`
  width: 311px;
`;

const Stats = styled.span`
  margin-left: auto;
`;

const MouseIcon = ({ side }) => (
  <svg width="14" height="20" viewBox="0 0 14 20" fill="none" stroke="currentColor" strokeWidth="1.300" aria-hidden="true">
    <rect x="1" y="1" width="12" height="18" rx="4" />
    {side === "left" && <path d="M1 9V4c0-2 1-3 3-3h2.500v8Z" {...solid} />}
    {side === "middle" && <rect x="5" y="4" width="4" height="7" rx="1" {...solid} />}
    {side === "right" && <path d="M13 9V4c0-2-1-3-3-3H7.500v8Z" {...solid} />}
  </svg>
);

/* ---------- taskbar ---------- */

const Taskbar = styled.footer`
  display: flex;
  height: 50px;
  background: #101010;
  color: #fff;
  font-family: "Open Sans", sans-serif;
  font-size: 14px;
`;

const StartButton = styled.button`
  display: grid;
  place-items: center;
  width: 60px;
`;

const TaskSearch = styled.label`
  display: flex;
  align-items: center;
  gap: 11px;
  width: 430px;
  padding: 0 18px 0 11px;
  border-top: 1px solid #aaa;
  background: #f2f2f2;
  color: #2b2b2b;
  font-size: 17px;
  input {
    flex: 1;
    min-width: 0;
  }
  input::placeholder {
    color: #3a3a3a;
    opacity: 1;
  }
`;

const TaskButton = styled.button`
  display: grid;
  place-items: center;
  width: 62px;
  border-bottom: 3px solid ${({ $active }) => ($active ? "#e59aec" : "transparent")};
  border-top: 3px solid transparent;
  background: ${({ $active }) => ($active ? "#333" : "none")};
`;

const Tray = styled.div`
  display: flex;
  align-items: center;
  gap: 10px;
  margin-left: auto;
  padding-right: 5px;
`;

const TrayButton = styled.button`
  display: grid;
  place-items: center;
  height: 50px;
  min-width: 20px;
  margin: 0 ${({ $space }) => $space || 0}px;
`;

const Clock = styled.div`
  text-align: center;
  line-height: 23px;
`;

const DesktopEdge = styled.span`
  align-self: stretch;
  border-left: 1px solid #555;
`;

const TaskIcon = (props) => <Svg size={28} box={28} stroke="none" {...props} />;

const taskApps = [
  {
    name: "Task View",
    icon: (
      <TaskIcon stroke="#fff" strokeWidth="1.200">
        <rect x="4.500" y="9.500" width="12" height="9" />
        <path d="M4.500 4v3h12V4M4.500 24v-3h12v3M22.500 4v5M22.500 15v9" />
        <rect x="21" y="10.500" width="3" height="3" fill="#fff" stroke="none" />
      </TaskIcon>
    ),
  },
  {
    name: "Edge",
    icon: (
      <TaskIcon>
        <path
          fill="#0078d7"
          d="M1.500 13C2.500 6 7.500 1 14.500 1 21.500 1 26 6 26 12.500V16H10c.3 4 3.500 6.300 8 6.300 2.700 0 5-.7 7-1.800V26c-2.300 1.200-5 1.800-8 1.800C9.500 27.800 4.500 23 4.500 17c0-3.500 2-6.700 5.500-8.500-4 .3-7 2-8.500 4.500ZM10.500 11.500H19C19 8.500 17.500 6.500 15 6.500s-4 2-4.500 5Z"
        />
      </TaskIcon>
    ),
  },
  {
    name: "File Explorer",
    icon: (
      <TaskIcon>
        <path fill="#f5b800" d="M1 3h9l2 3h15v6H1Z" />
        <path fill="#ffe28a" d="M1 7h26v18H1Z" />
        <path fill="#35b1e8" d="M5 26V16h18v10h-4.500v-5h-9v5Z" />
      </TaskIcon>
    ),
  },
  {
    name: "Store",
    icon: (
      <TaskIcon>
        <path d="M9 8V5.500C9 1 18 1 18 5.500V8M11.500 7V4.500C13 2 18 2.500 18 5" stroke="#fff" strokeWidth="1.300" />
        <path fill="#fff" d="M0 7h28v21H0Z" />
        <path fill="#f25022" d="M8 12h5.500v5H8Z" />
        <path fill="#7fba00" d="M14.500 12H20v5h-5.500Z" />
        <path fill="#00a4ef" d="M8 18h5.500v5H8Z" />
        <path fill="#ffb900" d="M14.500 18H20v5h-5.500Z" />
      </TaskIcon>
    ),
  },
  {
    name: "Mail",
    icon: (
      <TaskIcon size={30}>
        <path fill="#fff" d="M0 10 14 3l14 7v16H0Z" />
        <path fill="#101010" d="M1 10.500h26L17 16l6 6L10 16Z" />
      </TaskIcon>
    ),
  },
  {
    name: "Chrome",
    icon: (
      <TaskIcon>
        <circle cx="14" cy="14" r="13.500" fill="#fbcc45" />
        <path fill="#db4a3d" d="M2.300 7.200a13.500 13.500 0 0 1 23.400 0L25.300 8H14a6 6 0 0 0-5.400 8.500Z" />
        <path fill="#1a9e5c" d="M2.300 7.200A13.500 13.500 0 0 0 13 27.500L18.500 18C14 22 9.500 19 8.300 17Z" />
        <circle cx="14" cy="14" r="6.300" fill="#fff" />
        <circle cx="14" cy="14" r="5" fill="#4c8bf5" />
      </TaskIcon>
    ),
  },
  {
    name: "Blender",
    active: true,
    icon: <BlenderLogo size={30} main="#ea7600" ring="#fff" eye="#235a91" />,
  },
];

const TaskbarView = () => (
  <Taskbar>
    <StartButton aria-label="Start">
      <Svg size={20} stroke="none">
        <path fill="#fff" d="M0 3 8.500 1.800v7.700H0ZM9.500 1.600 20 0v9.500H9.500ZM0 10.500h8.500v7.700L0 17ZM9.500 10.500H20V20L9.500 18.400Z" />
      </Svg>
    </StartButton>
    <TaskSearch>
      <Svg size={28} box={28}>
        <circle cx="14" cy="14" r="11.500" stroke="#000" strokeWidth="3.500" />
      </Svg>
      <input aria-label="Cerca" placeholder="Scrivi qui per eseguire la ricerca" />
      <Svg size={16} box={16} height="22" viewBox="0 0 16 22">
        <rect x="5" y="1.500" width="6" height="13" rx="1" />
        <path d="M2 11v3.500c0 1.500 1 3 3 3h6c2 0 3-1.500 3-3V11M8 17.500V21M5 21h6" />
      </Svg>
    </TaskSearch>
    {taskApps.map(({ name, icon, active }) => (
      <TaskButton key={name} $active={active} aria-label={name}>
        {icon}
      </TaskButton>
    ))}
    <Tray>
      <TrayButton $space={15} aria-label="People">
        <Svg>
          <circle cx="13.500" cy="5" r="3" />
          <path d="M10 12c1-5 6-5 8 0" />
          <circle cx="6.500" cy="10" r="2.800" />
          <path d="M2 18.500c1-7 8-7 9 0" />
        </Svg>
      </TrayButton>
      <TrayButton aria-label="Show hidden icons">
        <Svg size={18} box={18}>
          <path d="M2 13 9 5l7 8" />
        </Svg>
      </TrayButton>
      <TrayButton aria-label="OneDrive">
        <Svg stroke="none">
          <path fill="#8d8d8d" d="M5 10C5 2 15 2 16 9l-5 6H1c-1-3 1-5 4-5Z" />
          <path fill="#fff" d="M2.500 16C-1 15.500 0 10 4 10.500l4-1.500 4 2 4-2c4 0 5 6 1.500 7Z" />
        </Svg>
      </TrayButton>
      <TrayButton aria-label="Battery">
        <Svg>
          <rect x="1" y="4.500" width="16.500" height="11" />
          <rect x="3" y="6.500" width="12" height="7" {...solid} />
          <path d="M19 8v4" />
        </Svg>
      </TrayButton>
      <TrayButton aria-label="Network">
        <Svg strokeWidth="1.200">
          <circle cx="15" cy="16" r="1.300" {...solid} />
          <path d="M10.500 18c0-4 2-6 5-6.500M7 18.500C7 12.500 11 8.500 16 8" />
          <path d="M4 18.500C4 11 9.500 5.500 16 4.500M1.500 17.500C1.500 9 8 2.500 16 1.500" opacity=".45" />
        </Svg>
      </TrayButton>
      <TrayButton aria-label="Volume">
        <Svg strokeWidth="1.200">
          <path d="M1 7h3l4-4v14l-4-4H1ZM10.500 7c1.500 2 1.500 4 0 6M13 5c2.500 3 2.500 7 0 10" />
          <path d="M15.500 3c3.500 4 3.500 10 0 14" opacity=".5" />
        </Svg>
      </TrayButton>
      <TrayButton $space={8}>ITA</TrayButton>
      <Clock>
        15:26
        <br />
        07/07/2019
      </Clock>
      <TrayButton $space={15} aria-label="Notifications">
        <Svg>
          <path d="M.8 1.500h18.400v15H13L10 19l-3-2.500H.8Z" />
        </Svg>
      </TrayButton>
      <DesktopEdge />
    </Tray>
  </Taskbar>
);

const workspaces = [
  "Layout",
  "Modeling",
  "Sculpting",
  "UV Editing",
  "Texture Paint",
  "Shading",
  "Animation",
  "Rendering",
  "Compositing",
  "Scripting",
];

const IdBlock = ({ icon: Icon, label, value }) => (
  <DataBlock>
    <Control $menu aria-label={`Browse ${label}`}>
      <Icon />
      <Chevron />
    </Control>
    <DataName aria-label={label} defaultValue={value} />
    <DataButton $raised aria-label={`New ${label}`}>
      <CopyIcon />
    </DataButton>
    <DataButton aria-label={`Remove ${label}`}>
      <CrossIcon />
    </DataButton>
  </DataBlock>
);

const App = () => (
  <Window>
    <GlobalStyle />
    <TitleBar>
      <BlenderLogo size={20} main="#ea7600" ring="#fff" eye="#235a91" />
      Blender
      <WindowButtons>
        <WindowButton aria-label="Minimize">
          <Svg size={12} box={12} strokeWidth="1">
            <path d="M0 6.500h12" />
          </Svg>
        </WindowButton>
        <WindowButton aria-label="Restore">
          <Svg size={14} box={14} strokeWidth="1.200">
            <path d="M1 4h9v9H1ZM3.500 4V1.500H13V11h-3" />
          </Svg>
        </WindowButton>
        <WindowButton aria-label="Close">
          <CrossIcon width={1.2} />
        </WindowButton>
      </WindowButtons>
    </TitleBar>
    <MenuBar>
      <Menus>
        <LogoButton aria-label="Blender menu">
          <BlenderLogo />
        </LogoButton>
        {["File", "Edit", "Render", "Window", "Help"].map((name) => (
          <MenuButton key={name}>{name}</MenuButton>
        ))}
      </Menus>
      <Tabs>
        {workspaces.map((name) => (
          <Tab key={name} $active={name === "Layout"}>
            {name}
          </Tab>
        ))}
        <AddTab aria-label="Add workspace">
          <PlusIcon />
        </AddTab>
      </Tabs>
      <DataBlocks>
        <IdBlock icon={SceneIcon} label="scene" value="Scene" />
        <IdBlock icon={LayerIcon} label="view layer" value="View Layer" />
      </DataBlocks>
    </MenuBar>
    <Main>
      <LeftColumn>
        <View3D />
        <Timeline />
      </LeftColumn>
      <RightColumn>
        <OutlinerEditor />
        <PropertiesEditor />
      </RightColumn>
    </Main>
    <StatusBar>
      {["left", "middle", "right"].map((side) => (
        <MouseHint key={side}>
          <MouseIcon side={side} />
        </MouseHint>
      ))}
      <Stats>Collection | Verts:0 | Faces:0 | Tris:0 | Objects:0/2 | Mem: 33.4 MB | v2.80.74</Stats>
    </StatusBar>
    <TaskbarView />
  </Window>
);

export default App;
